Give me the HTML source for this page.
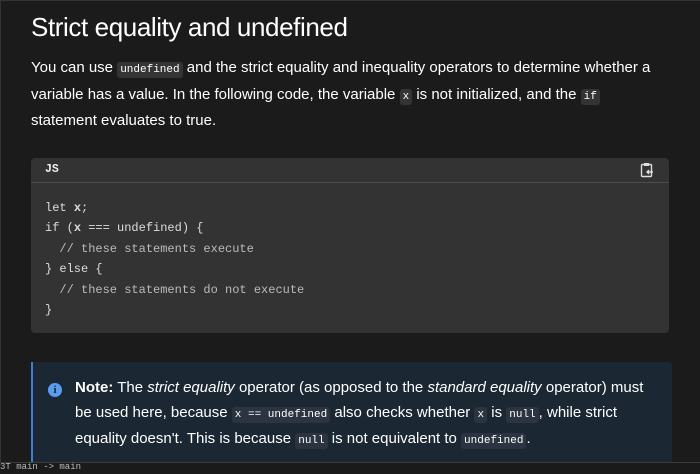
<!DOCTYPE html>
<html><head><style>
body{margin:0;width:700px;height:473px;overflow:hidden;background:#1b1b1b;font-family:"Liberation Sans",sans-serif;color:#fff;position:relative}
.frame{position:absolute;left:0;top:0;width:699px;height:472px;border-top:1px solid #333;border-left:1px solid #333}
h1{position:absolute;left:31px;top:12px;margin:0;font-weight:300;font-size:26px;letter-spacing:-0.4px;color:#fff}
p.intro{position:absolute;left:31px;top:56px;width:632px;margin:0;font-size:15px;line-height:24.5px;color:#fff}
code{font-family:"Liberation Mono",monospace;font-size:11px;background:#343434;border-radius:3px;padding:2px 3px}
.cb{position:absolute;left:31px;top:158px;width:638px;height:175px;background:#333;border-radius:4px}
.cbh{height:24px;border-bottom:1px solid #4d4d4d;font-family:"Liberation Mono",monospace;font-size:11.5px;font-weight:bold;line-height:24px;padding-left:14px;color:#eee}
pre{margin:0;position:absolute;left:14px;top:40px;font-family:"Liberation Mono",monospace;font-size:12px;line-height:20.4px;color:#ddd}
.c{color:#bbb}
.note{position:absolute;left:31px;top:362px;width:639px;height:111px;background:#1b2733;border-left:2px solid #3d7dd6;border-radius:0 4px 0 0}
.note p{position:absolute;left:42px;top:14px;width:585px;margin:0;font-size:15px;line-height:24.5px;color:#fff}
.note code{background:#2b3440}
.ic{position:absolute;left:15px;top:21px;width:14px;height:14px;border-radius:50%;background:#5a9cf0;color:#1b2733;font-size:11px;font-weight:bold;text-align:center;line-height:14px;font-family:"Liberation Serif",serif}
.bar{position:absolute;left:0;top:462px;width:700px;height:11px;background:#1a1a1a;border-top:1px solid #3a3a3a;font-family:"Liberation Mono",monospace;font-size:9px;color:#bbb;line-height:9px;padding-left:0}
</style></head><body>
<div class="frame"></div>
<h1>Strict equality and undefined</h1>
<p class="intro">You can use <code>undefined</code> and the strict equality and inequality operators to determine whether a variable has a value. In the following code, the variable <code>x</code> is not initialized, and the <code>if</code> statement evaluates to true.</p>
<div class="cb"><div class="cbh">JS</div>
<svg style="position:absolute;left:609px;top:4px" width="14" height="16" viewBox="0 0 14 16"><rect x="1.5" y="2.5" width="10" height="12" rx="1" fill="none" stroke="#ddd" stroke-width="1.4"/><rect x="4" y="1" width="5" height="3" fill="#ddd"/><path d="M13 10H7M9 8l-2 2 2 2" stroke="#ddd" stroke-width="1.4" fill="none"/></svg>
<pre>let <b>x</b>;
if (<b>x</b> === undefined) {
<span class="c">  // these statements execute</span>
} else {
<span class="c">  // these statements do not execute</span>
}</pre></div>
<div class="note"><div class="ic">i</div><p><b>Note:</b> The <i>strict equality</i> operator (as opposed to the <i>standard equality</i> operator) must be used here, because <code>x == undefined</code> also checks whether <code>x</code> is <code>null</code>, while strict equality doesn't. This is because <code>null</code> is not equivalent to <code>undefined</code>.</p></div>
<div class="bar">3T  main -&gt; main</div>
</body></html>
